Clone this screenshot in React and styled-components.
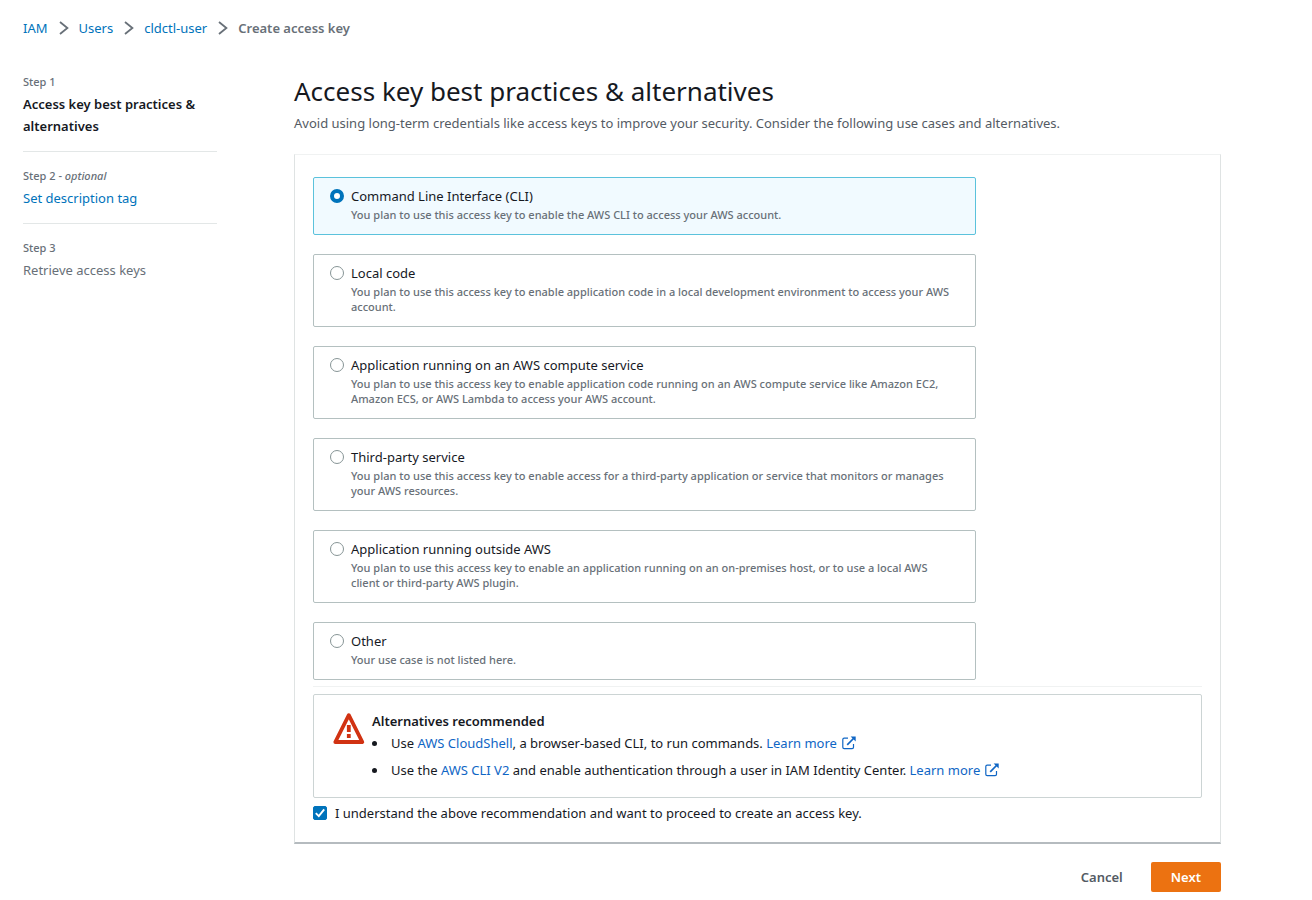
import React, { useState } from "react";
import styled, { createGlobalStyle, css } from "styled-components";

const color = {
  text: "#16191f",
  secondary: "#545b64",
  muted: "#687078",
  link: "#0073bb",
  infoLink: "#0f66c5",
  line: "#e3e7e7",
  border: "#b4c0c0",
  orange: "#ec7211",
  red: "#d13212",
};

const GlobalStyle = createGlobalStyle`
  *, *::before, *::after { box-sizing: border-box; }
  body {
    margin: 0;
    background: #fff;
    color: ${color.text};
    font: 400 13px/22px "Noto Sans", "Open Sans", sans-serif;
  }
`;

const Page = styled.div`
  padding: 17px 91px 8px 23px;
`;

const Link = styled.a`
  color: ${(p) => (p.$info ? color.infoLink : color.link)};
  text-decoration: none;
  &:hover { text-decoration: underline; }
`;

const BreadcrumbList = styled.ol`
  display: flex;
  align-items: center;
  gap: 10px;
  margin: 0;
  padding: 0;
  list-style: none;
`;

const BreadcrumbItem = styled.li`
  display: flex;
  align-items: center;
  gap: 11px;
  color: ${color.muted};
  font-weight: ${(p) => (p.$current ? 600 : 400)};
`;

const Columns = styled.div`
  display: grid;
  grid-template-columns: 194px minmax(0, 1fr);
  column-gap: 77px;
  margin-top: 34px;
`;

const StepList = styled.ol`
  margin: 0;
  padding: 0;
  list-style: none;
`;

const Step = styled.li`
  display: flex;
  flex-direction: column;
  gap: 2px;
  padding-bottom: 14px;
  & + & {
    padding-top: 15px;
    border-top: 1px solid ${color.line};
  }
`;

const StepLabel = styled.span`
  color: ${color.muted};
  font-size: 11px;
  font-weight: 500;
  line-height: 18px;
`;

const StepName = styled.span`
  color: ${(p) => (p.$active ? color.text : color.muted)};
  font-weight: ${(p) => (p.$active ? 600 : 400)};
`;

const Title = styled.h1`
  margin: 0;
  font-size: 26px;
  font-weight: 400;
  line-height: 36px;
`;

const Subtitle = styled.p`
  margin: 3px 0 20px;
  color: ${color.secondary};
`;

const Panel = styled.section`
  padding: 22px 18px 18px;
  border: 1px solid #dfe3e3;
  border-top-color: #f0f2f2;
  border-bottom: 2px solid #b5bbbf;
`;

const OptionGroup = styled.fieldset`
  display: flex;
  flex-direction: column;
  gap: 19px;
  width: calc(75% - 4px);
  min-width: 0;
  margin: 0;
  padding: 0;
  border: 0;
`;

const OptionCard = styled.label`
  display: grid;
  grid-template-columns: 14px minmax(0, 1fr);
  column-gap: 7px;
  padding: 8px 16px 12px;
  border: 1px solid ${color.border};
  border-radius: 2px;
  cursor: pointer;
  ${(p) => p.$selected && css`
    border-color: #5bc2dc;
    background: #f1faff;
  `}
`;

const Radio = styled.input`
  appearance: none;
  width: 14px;
  height: 14px;
  margin: 3px 0 0;
  border: 1px solid #879596;
  border-radius: 50%;
  background: #fff;
  &:checked { border: 4px solid ${color.link}; }
`;

const OptionText = styled.span`
  display: flex;
  flex-direction: column;
  gap: 1px;
`;

const OptionTitle = styled.span`
  line-height: 20px;
`;

const OptionHint = styled.span`
  color: ${color.muted};
  font-size: 11px;
  font-weight: 500;
  line-height: 15px;
`;

const Divider = styled.hr`
  margin: 6px 0 7px;
  border: 0;
  border-top: 1px solid #f0f2f2;
`;

const Alert = styled.div`
  display: flex;
  gap: 7px;
  padding: 15px 18px 16px;
  border: 1px solid #ccd4d4;
  border-radius: 2px;
`;

const WarningIcon = styled.svg`
  flex: none;
  width: 33px;
  height: 33px;
  margin-top: 2px;
`;

const AlertTitle = styled.h2`
  margin: 0;
  font-size: 13px;
  font-weight: 600;
  line-height: 22px;
`;

const AlertList = styled.ul`
  display: flex;
  flex-direction: column;
  gap: 5px;
  margin: 0;
  padding: 0;
  list-style: none;
`;

const AlertItem = styled.li`
  padding-left: 19px;
  &::before {
    content: "";
    display: inline-block;
    width: 5px;
    height: 5px;
    margin: 0 14px 0 -19px;
    border-radius: 50%;
    background: ${color.text};
    vertical-align: 2px;
  }
`;

const ExternalSvg = styled.svg`
  width: 14px;
  height: 14px;
  margin-left: 5px;
  vertical-align: -2px;
`;

const ConfirmRow = styled.label`
  display: flex;
  align-items: center;
  gap: 8px;
  margin-top: 4px;
  cursor: pointer;
`;

const CheckWrap = styled.span`
  display: grid;
  width: 14px;
  height: 14px;
  & > * { grid-area: 1 / 1; }
`;

const Checkbox = styled.input`
  appearance: none;
  width: 14px;
  height: 14px;
  margin: 0;
  border: 1px solid #879596;
  border-radius: 2px;
  &:checked {
    border-color: ${color.link};
    background: ${color.link};
  }
`;

const CheckMark = styled.svg`
  z-index: 1;
  width: 14px;
  height: 14px;
  pointer-events: none;
`;

const Actions = styled.footer`
  display: flex;
  justify-content: flex-end;
  gap: 8px;
  margin-top: 18px;
`;

const Button = styled.button`
  height: 30px;
  padding: 0 20px;
  border: 0;
  border-radius: 2px;
  background: ${(p) => (p.$primary ? color.orange : "transparent")};
  color: ${(p) => (p.$primary ? "#fff" : color.secondary)};
  font: inherit;
  font-weight: 600;
  cursor: pointer;
`;

const Chevron = () => (
  <svg width="10" height="14" viewBox="0 0 10 14" fill="none" stroke={color.muted} strokeWidth="1.8" aria-hidden="true">
    <path d="M1 1l7.4 6L1 13" />
  </svg>
);

const ExternalIcon = () => (
  <ExternalSvg viewBox="0 0 14 14" fill="none" stroke="currentColor" aria-hidden="true">
    <path d="M6 2.2H2.2Q.8 2.2.8 3.6v7.6q0 1.4 1.4 1.4h7.9q1.4 0 1.4-1.4V8" strokeWidth="1.2" />
    <path d="M5.2 8.8L11.5 2.5" strokeWidth="1.7" />
    <path d="M8.6.5h5.1v5.1z" fill="currentColor" stroke="none" />
  </ExternalSvg>
);

const LearnMore = () => (
  <Link $info href="#learn-more">Learn more<ExternalIcon /></Link>
);

const options = [
  ["cli", "Command Line Interface (CLI)", "You plan to use this access key to enable the AWS CLI to access your AWS account."],
  ["local", "Local code", "You plan to use this access key to enable application code in a local development environment to access your AWS account."],
  ["compute", "Application running on an AWS compute service", "You plan to use this access key to enable application code running on an AWS compute service like Amazon EC2, Amazon ECS, or AWS Lambda to access your AWS account."],
  ["third-party", "Third-party service", "You plan to use this access key to enable access for a third-party application or service that monitors or manages your AWS resources."],
  ["outside", "Application running outside AWS", "You plan to use this access key to enable an application running on an on-premises host, or to use a local AWS client or third-party AWS plugin."],
  ["other", "Other", "Your use case is not listed here."],
];

export default function App() {
  const [useCase, setUseCase] = useState("cli");
  const [confirmed, setConfirmed] = useState(true);

  return (
    <>
      <GlobalStyle />
      <Page>
        <nav aria-label="Breadcrumbs">
          <BreadcrumbList>
            <BreadcrumbItem><Link href="#iam">IAM</Link><Chevron /></BreadcrumbItem>
            <BreadcrumbItem><Link href="#users">Users</Link><Chevron /></BreadcrumbItem>
            <BreadcrumbItem><Link href="#cldctl-user">cldctl-user</Link><Chevron /></BreadcrumbItem>
            <BreadcrumbItem $current aria-current="page">Create access key</BreadcrumbItem>
          </BreadcrumbList>
        </nav>
        <Columns>
          <nav aria-label="Steps">
            <StepList>
              <Step>
                <StepLabel>Step 1</StepLabel>
                <StepName $active>Access key best practices &amp; alternatives</StepName>
              </Step>
              <Step>
                <StepLabel>Step 2 - <em>optional</em></StepLabel>
                <StepName><Link href="#tag">Set description tag</Link></StepName>
              </Step>
              <Step>
                <StepLabel>Step 3</StepLabel>
                <StepName>Retrieve access keys</StepName>
              </Step>
            </StepList>
          </nav>
          <main>
            <Title>Access key best practices &amp; alternatives</Title>
            <Subtitle>
              Avoid using long-term credentials like access keys to improve your security. Consider the following use cases and alternatives.
            </Subtitle>
            <Panel>
              <OptionGroup aria-label="Use case">
                {options.map(([id, title, hint]) => (
                  <OptionCard key={id} $selected={useCase === id}>
                    <Radio type="radio" name="use-case" value={id} checked={useCase === id} onChange={() => setUseCase(id)} />
                    <OptionText>
                      <OptionTitle>{title}</OptionTitle>
                      <OptionHint>{hint}</OptionHint>
                    </OptionText>
                  </OptionCard>
                ))}
              </OptionGroup>
              <Divider />
              <Alert>
                <WarningIcon viewBox="0 0 33 33" fill="none" stroke={color.red} aria-hidden="true">
                  <path d="M16.8 3.2L30.3 30H3.3z" strokeWidth="3.8" strokeLinejoin="round" />
                  <path d="M16.8 13v7M16.8 22v4" strokeWidth="3.8" />
                </WarningIcon>
                <div>
                  <AlertTitle>Alternatives recommended</AlertTitle>
                  <AlertList>
                    <AlertItem>
                      Use <Link $info href="#cloudshell">AWS CloudShell</Link>, a browser-based CLI, to run commands. <LearnMore />
                    </AlertItem>
                    <AlertItem>
                      Use the <Link $info href="#cli-v2">AWS CLI V2</Link> and enable authentication through a user in IAM Identity Center. <LearnMore />
                    </AlertItem>
                  </AlertList>
                </div>
              </Alert>
              <ConfirmRow>
                <CheckWrap>
                  <Checkbox type="checkbox" checked={confirmed} onChange={(e) => setConfirmed(e.target.checked)} />
                  {confirmed && (
                    <CheckMark viewBox="0 0 14 14" fill="none" stroke="#fff" strokeWidth="1.9" aria-hidden="true">
                      <path d="M2.8 7.2l3 3 5.4-6.8" />
                    </CheckMark>
                  )}
                </CheckWrap>
                I understand the above recommendation and want to proceed to create an access key.
              </ConfirmRow>
            </Panel>
            <Actions>
              <Button type="button">Cancel</Button>
              <Button type="button" $primary>Next</Button>
            </Actions>
          </main>
        </Columns>
      </Page>
    </>
  );
}
